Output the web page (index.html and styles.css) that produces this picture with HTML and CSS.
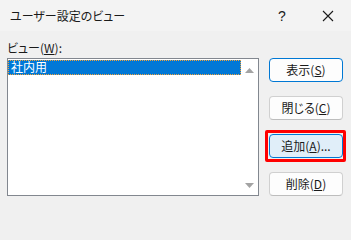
FILE: index.html
```html
<!DOCTYPE html>
<html lang="ja">
<head>
<meta charset="utf-8">
<link rel="stylesheet" href="styles.css">
</head>
<body>
<div class="dialog">
  <div class="titlebar">
    <div class="title">ユーザー設定のビュー</div>
    <div class="tb-btn help">?</div>
    <div class="tb-btn close">
      <svg width="12" height="12" viewBox="0 0 12 12"><path d="M1 1 L11 11 M11 1 L1 11" stroke="#1a1a1a" stroke-width="1.1" fill="none"/></svg>
    </div>
  </div>
  <div class="content">
    <div class="left">
      <div class="label">ビュー(<u>W</u>):</div>
      <div class="listbox">
        <div class="items">
          <div class="item selected">社内用</div>
        </div>
        <div class="scrollbar">
          <svg width="9" height="5" viewBox="0 0 9 5"><path d="M0 5 L4.5 0 L9 5 Z" fill="#a3a3a3"/></svg>
          <svg width="9" height="5" viewBox="0 0 9 5"><path d="M0 0 L4.5 5 L9 0 Z" fill="#a3a3a3"/></svg>
        </div>
      </div>
    </div>
    <div class="buttons">
      <div class="btn default">表示(<u>S</u>)</div>
      <div class="btn">閉じる(<u>C</u>)</div>
      <div class="mark">
        <div class="btn hot">追加(<u>A</u>)...</div>
      </div>
      <div class="btn">削除(<u>D</u>)</div>
    </div>
  </div>
</div>
</body>
</html>
```

FILE: styles.css
```css
html, body {
  margin: 0;
  padding: 0;
}
body {
  width: 351px;
  height: 206px;
  overflow: hidden;
  font-family: "Noto Sans CJK JP", "Noto Sans", sans-serif;
  font-size: 12px;
  font-feature-settings: "palt";
  color: #1a1a1a;
  background: #f0f0f0;
}
.dialog {
  display: flex;
  flex-direction: column;
  height: 206px;
}
.titlebar {
  height: 31px;
  background: #f3f3f3;
  display: flex;
  align-items: center;
}
.title {
  flex: 1;
  padding-left: 10px;
  font-size: 12px;
  line-height: 31px;
}
.tb-btn {
  width: 46px;
  height: 31px;
  display: flex;
  align-items: center;
  justify-content: center;
}
.help {
  font-family: "Liberation Sans", sans-serif;
  font-size: 14px;
}
.content {
  flex: 1;
  display: flex;
  padding: 9px 8px 0 7px;
  background: #f0f0f0;
}
.left {
  display: flex;
  flex-direction: column;
  width: 252px;
}
.label {
  height: 18px;
  line-height: 16px;
}
.listbox {
  height: 138px;
  box-sizing: border-box;
  border: 1px solid #82878f;
  background: #fff;
  display: flex;
}
.items {
  flex: 1;
  padding-top: 1px;
}
.item {
  height: 15px;
  line-height: 14px;
  padding-left: 3px;
  box-sizing: border-box;
}
.item.selected {
  background: #0078d7;
  color: #fff;
  outline: 1px dotted #f2a33a;
  outline-offset: -1px;
}
.scrollbar {
  width: 17px;
  display: flex;
  flex-direction: column;
  align-items: center;
  justify-content: space-between;
  padding: 9px 0 7px;
}
.buttons {
  margin-left: 10px;
  padding-top: 18px;
  display: flex;
  flex-direction: column;
  gap: 14px;
}
.btn {
  width: 74px;
  height: 24px;
  box-sizing: border-box;
  border: 1px solid #d0d0d0;
  border-bottom-color: #bdbdbd;
  border-radius: 4px;
  background: #fdfdfd;
  display: flex;
  align-items: center;
  justify-content: center;
  line-height: 1;
}
.btn.default {
  border-color: #0078d4;
}
.mark {
  margin: -4px -3px -4px -4px;
  padding: 1px 0 1px 1px;
  border: 3px solid #ff0000;
  border-radius: 2px;
}
.btn.hot {
  background: #e0eef9;
  border-color: #0078d4;
}
```
